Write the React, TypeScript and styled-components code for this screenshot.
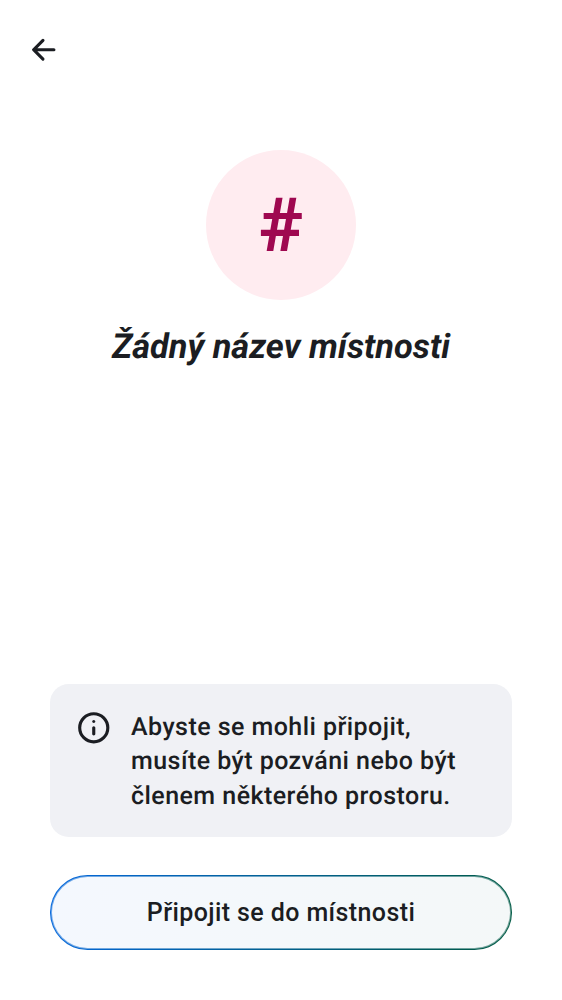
import React from 'react';
import styled, { createGlobalStyle } from 'styled-components';

const GlobalStyle = createGlobalStyle`
  * { box-sizing: border-box; }
  body { margin: 0; background: #fff; color: #1b1d22; font-family: Roboto, "Liberation Sans", sans-serif; text-rendering: geometricPrecision; }
`;

const Screen = styled.main`
  display: flex;
  flex-direction: column;
  height: 1000px;
  padding: 0 50px 50px;
  background: #fff;
`;

const TopBar = styled.header`
  display: flex;
  align-items: center;
  height: 100px;
  margin: 0 -50px;
  padding: 0 25px;
`;

const BackButton = styled.button`
  display: flex;
  padding: 0;
  border: 0;
  background: none;
  color: inherit;
`;

const RoomHeader = styled.section`
  display: flex;
  flex-direction: column;
  align-items: center;
  gap: 26px;
  padding-top: 50px;
`;

const Avatar = styled.div`
  display: flex;
  align-items: center;
  justify-content: center;
  width: 150px;
  height: 150px;
  padding-top: 2px;
  border-radius: 50%;
  background: #ffecf0;
  color: #9f0850;
  font-size: 75px;
  font-weight: 700;
  line-height: 1;
`;

const RoomName = styled.h1`
  margin: 0;
  font-size: 34.375px;
  font-style: italic;
  font-weight: 700;
  line-height: 42px;
  white-space: nowrap;
`;

const Actions = styled.footer`
  display: flex;
  flex-direction: column;
  gap: 38px;
  margin-top: auto;
`;

const Announcement = styled.div`
  display: flex;
  gap: 18.5px;
  height: 153px;
  padding: 25px;
  border-radius: 18.75px;
  background: #f0f1f5;
`;

const Message = styled.p`
  margin: 0;
  padding-top: 2px;
  font-size: 25px;
  font-weight: 500;
  line-height: 34.375px;
  letter-spacing: 0.45px;
  white-space: nowrap;
`;

const JoinButton = styled.button`
  height: 75px;
  padding: 1px;
  border: 1px solid transparent;
  border-radius: 37.5px;
  background:
    linear-gradient(100deg, #f4f8fe, #f4f8f8) content-box,
    linear-gradient(#ffffff70, #ffffff70) padding-box,
    linear-gradient(100deg, #0467dd, #005a43) border-box;
  color: inherit;
  font: 500 25px/71px Roboto, "Liberation Sans", sans-serif;
  letter-spacing: 0.4px;
`;

export default function App() {
  return (
    <>
      <GlobalStyle />
      <Screen>
        <TopBar>
          <BackButton aria-label="Zpět">
            <svg width="37.5" height="37.5" viewBox="0 0 24 24" fill="currentColor">
              <path d="M12.207 5.293a1 1 0 0 1 0 1.414L7.914 11H18.5a1 1 0 1 1 0 2H7.914l4.293 4.293a1 1 0 0 1-1.414 1.414l-6-6a1 1 0 0 1 0-1.414l6-6a1 1 0 0 1 1.414 0" />
            </svg>
          </BackButton>
        </TopBar>
        <RoomHeader>
          <Avatar>#</Avatar>
          <RoomName>Žádný název místnosti</RoomName>
        </RoomHeader>
        <Actions>
          <Announcement>
            <svg width="37.5" height="37.5" viewBox="0 0 24 24" fill="currentColor">
              <path d="M11.288 16.713A.97.97 0 0 0 12 17q.424 0 .713-.287A.97.97 0 0 0 13 16v-4a.97.97 0 0 0-.287-.713A.97.97 0 0 0 12 11a.97.97 0 0 0-.713.287A.97.97 0 0 0 11 12v4q0 .424.287.713m0-8A.97.97 0 0 0 12 9q.424 0 .713-.287A.97.97 0 0 0 13 8a.97.97 0 0 0-.287-.713A.97.97 0 0 0 12 7a.97.97 0 0 0-.713.287A.97.97 0 0 0 11 8q0 .424.287.713" />
              <path fillRule="evenodd" d="M12 2a10 10 0 1 0 0 20 10 10 0 0 0 0-20m0 2a8 8 0 1 1 0 16 8 8 0 0 1 0-16" />
            </svg>
            <Message>Abyste se mohli připojit,<br />musíte být pozváni nebo být<br />členem některého prostoru.</Message>
          </Announcement>
          <JoinButton>Připojit se do místnosti</JoinButton>
        </Actions>
      </Screen>
    </>
  );
}
